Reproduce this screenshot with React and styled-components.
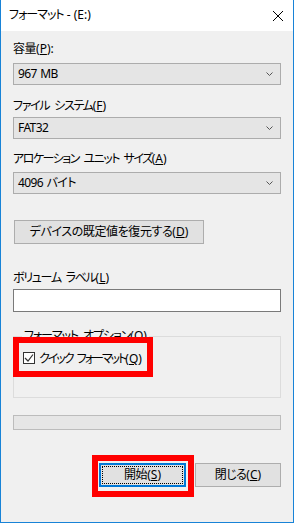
import React from "react";
import styled, { createGlobalStyle } from "styled-components";

const Global = createGlobalStyle`
  html, body {
    margin: 0;
    padding: 0;
    background: #ffffff;
  }
  * {
    box-sizing: border-box;
  }
`;

const FONT = `"Noto Sans", "Noto Sans CJK JP", sans-serif`;

const Window = styled.div`
  width: 294px;
  height: 523px;
  display: flex;
  flex-direction: column;
  border: 1px solid #1883d7;
  border-top: none;
  background: #f0f0f0;
  font-family: ${FONT};
  font-size: 12px;
  font-feature-settings: "palt";
  color: #000;
  overflow: hidden;
`;

// kana in the reference font runs narrower than Noto's
const Jp = styled.span`
  letter-spacing: ${(p) => p.$ls ?? -1.3}px;
  word-spacing: ${(p) => p.$ws ?? 3}px;
`;

const TitleBar = styled.div`
  height: 31px;
  flex: none;
  display: flex;
  align-items: center;
  justify-content: space-between;
  background: #ffffff;
  padding: 0 10px 0 8px;
`;

const Title = styled.span`
  font-size: 12px;
  line-height: 16px;
  margin-top: -1px;
`;

const CloseIcon = styled.svg`
  width: 10px;
  height: 10px;
  display: block;
`;

const Body = styled.div`
  flex: 1;
  display: flex;
  flex-direction: column;
  padding: 10px 12px 0 12px;
`;

const Label = styled.div`
  height: 16px;
  line-height: 16px;
  margin-top: ${(p) => p.$top || 0}px;
  margin-bottom: ${(p) => p.$bottom ?? 6}px;
  white-space: nowrap;
`;

const Key = styled.span`
  text-decoration: underline;
  text-underline-offset: 1px;
`;

const Combo = styled.div`
  height: 22px;
  display: flex;
  align-items: center;
  justify-content: space-between;
  padding: 0 7px 0 4px;
  background: #e5e5e5;
  border: 1px solid #acacac;
  line-height: 16px;
`;

const Chevron = styled.svg`
  width: 7px;
  height: 4px;
  display: block;
`;

const Button = styled.div`
  width: ${(p) => p.$w}px;
  height: ${(p) => p.$h || 24}px;
  display: flex;
  align-items: center;
  justify-content: center;
  background: #e1e1e1;
  border: 1px solid #adadad;
  line-height: 16px;
  white-space: nowrap;
`;

const RestoreButton = styled(Button)`
  margin-top: 26px;
  margin-left: 1px;
`;

const DefaultButton = styled(Button)`
  border: 2px solid #0078d7;
  position: relative;

  &::after {
    content: "";
    position: absolute;
    inset: 1px;
    border: 1px dotted #000;
  }
`;

const TextBox = styled.div`
  height: 23px;
  background: #ffffff;
  border: 1px solid #7a7a7a;
`;

const Group = styled.fieldset`
  margin: 16px 0 0 0;
  padding: 0 0 0 9px;
  height: 70px;
  border: 1px solid #dcdcdc;
  min-width: 0;
`;

const Legend = styled.legend`
  padding: 0 2px;
  margin-left: -1px;
  line-height: 16px;
  height: 16px;
`;

const CheckRow = styled.div`
  position: relative;
  display: flex;
  align-items: center;
  gap: 4px;
  margin-top: 6px;
  height: 16px;
`;

const CheckBox = styled.div`
  width: 12px;
  height: 12px;
  flex: none;
  background: #ffffff;
  border: 1px solid #333333;
  display: flex;
  align-items: center;
  justify-content: center;
`;

const Highlight = styled.div`
  position: absolute;
  border: 6px solid #ff0000;
  pointer-events: none;
  left: ${(p) => p.$l}px;
  top: ${(p) => p.$t}px;
  width: ${(p) => p.$w}px;
  height: ${(p) => p.$h}px;
`;

const Progress = styled.div`
  height: 15px;
  margin-top: 17px;
  background: #e6e6e6;
  border: 1px solid #bcbcbc;
`;

const Footer = styled.div`
  display: flex;
  justify-content: flex-end;
  gap: 9px;
  margin-top: 33px;
`;

const StartWrap = styled.div`
  position: relative;
`;

function Select({ value }) {
  return (
    <Combo>
      <Jp $ls={-0.6} $ws={1}>{value}</Jp>
      <Chevron viewBox="0 0 7 4">
        <path d="M0.5 0.5 L3.5 3.5 L6.5 0.5" fill="none" stroke="#555" strokeWidth="1" />
      </Chevron>
    </Combo>
  );
}

const App = () => {
  return (
    <>
      <Global />
      <Window>
        <TitleBar>
          <Title>
            <Jp $ls={-1}>フォーマット</Jp> - (E:)
          </Title>
          <CloseIcon viewBox="0 0 10 10">
            <path d="M0 0 L10 10 M10 0 L0 10" stroke="#000" strokeWidth="1" />
          </CloseIcon>
        </TitleBar>

        <Body>
          <Label>
            <Jp $ls={-0.5}>容量</Jp>(<Key>P</Key>):
          </Label>
          <Select value="967 MB" />

          <Label $top={13} $bottom={3}>
            <Jp>ファイル システム</Jp>(<Key>F</Key>)
          </Label>
          <Select value="FAT32" />

          <Label $top={12} $bottom={5}>
            <Jp $ls={-1.5}>アロケーション ユニット サイズ</Jp>(<Key>A</Key>)
          </Label>
          <Select value="4096 バイト" />

          <RestoreButton $w={190} $h={24}>
            <Jp $ls={-0.4}>デバイスの既定値を復元する</Jp>(<Key>D</Key>)
          </RestoreButton>

          <Label $top={26} $bottom={3}>
            <Jp>ボリューム ラベル</Jp>(<Key>L</Key>)
          </Label>
          <TextBox />

          <Group>
            <Legend>
              <Jp $ls={-1.1}>フォーマット オプション</Jp>(<Key>O</Key>)
            </Legend>
            <CheckRow>
              <CheckBox>
                <svg width="10" height="10" viewBox="0 0 10 10">
                  <path d="M1 5 L4 8 L9 1.5" fill="none" stroke="#333" strokeWidth="1.2" />
                </svg>
              </CheckBox>
              <span>
                <Jp $ls={-2}>クイック フォーマット</Jp>(<Key>Q</Key>)
              </span>
              <Highlight $l={-10} $t={-13} $w={140} $h={40} />
            </CheckRow>
          </Group>

          <Progress />

          <Footer>
            <StartWrap>
              <DefaultButton $w={87}>
                <Jp $ls={-0.4}>開始</Jp>(<Key>S</Key>)
              </DefaultButton>
              <Highlight $l={-7} $t={-8} $w={102} $h={42} />
            </StartWrap>
            <Button $w={86}>
              <Jp $ls={-0.6}>閉じる</Jp>(<Key>C</Key>)
            </Button>
          </Footer>
        </Body>
      </Window>
    </>
  );
};

export default App;
